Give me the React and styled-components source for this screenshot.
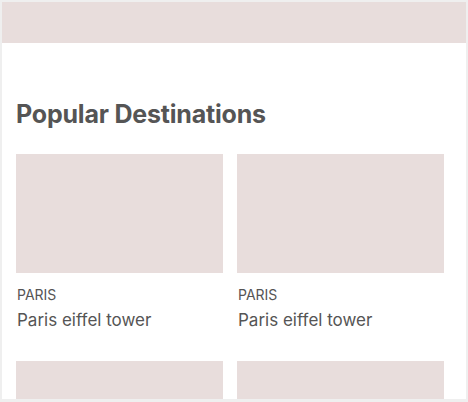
import React from 'react';
import styled, { createGlobalStyle } from 'styled-components';

const GlobalStyle = createGlobalStyle`
  html, body {
    margin: 0;
    padding: 0;
    background: #efefef;
  }

  body {
    font-family: Inter, "Liberation Sans", sans-serif;
  }
`;

// second row only peeks in at the bottom, its captions are below the fold
const destinations = [
  { city: 'PARIS', title: 'Paris eiffel tower' },
  { city: 'PARIS', title: 'Paris eiffel tower' },
  {},
  {},
];

const App = () => {
  return <>
    <GlobalStyle />
    <Frame>
      <Page>
        <TopBar />
        <Section>
          <Heading>Popular Destinations</Heading>
          <Grid>
            {destinations.map((d, i) => (
              <Card key={i}>
                <Thumb />
                {d.city && <City>{d.city}</City>}
                {d.title && <Title>{d.title}</Title>}
              </Card>
            ))}
          </Grid>
        </Section>
      </Page>
    </Frame>
  </>
}

export default App;

const Frame = styled.div`
  width: 468px;
  height: 402px;
  padding: 2px 2px 3px 2px;
  box-sizing: border-box;
  overflow: hidden;
`;

const Page = styled.div`
  width: 464px;
  height: 397px;
  background: #ffffff;
  overflow: hidden;
`;

const TopBar = styled.div`
  height: 41px;
  background: #e8dddc;
`;

const Section = styled.div`
  display: flex;
  flex-direction: column;

  padding: 56px 0 0 14px;
`;

const Heading = styled.h2`
  margin: 0;

  color: #555555;
  font-size: 25px;
  font-weight: 700;
  line-height: 30px;
  letter-spacing: -0.2px;
`;

const Grid = styled.div`
  display: grid;
  grid-template-columns: 207px 207px;
  column-gap: 14px;
  row-gap: 0;

  margin-top: 25px;
`;

const Card = styled.div`
  display: flex;
  flex-direction: column;

  height: 207px;
`;

const Thumb = styled.div`
  width: 207px;
  height: 119px;
  background: #e8dddc;
`;

const City = styled.div`
  margin-top: 13px;
  padding-left: 1px;

  color: #555555;
  font-size: 14px;
  line-height: 18px;
`;

const Title = styled.div`
  margin-top: 5px;
  padding-left: 1px;

  color: #555555;
  font-size: 17px;
  line-height: 22px;
`;
